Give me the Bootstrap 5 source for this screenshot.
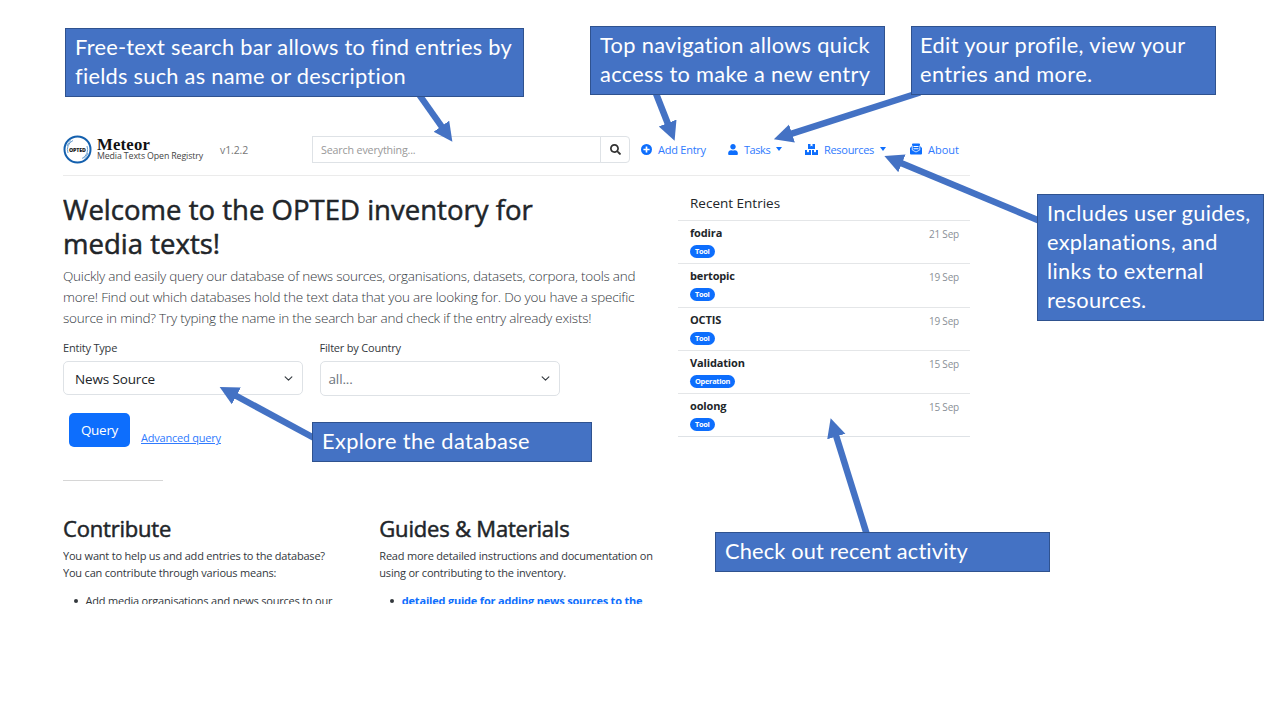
<!DOCTYPE html>
<html lang="en">
<head>
<meta charset="utf-8">
<meta name="viewport" content="width=device-width, initial-scale=1">
<title>Meteor</title>
<link href="https://cdn.jsdelivr.net/npm/bootstrap@5.3.0/dist/css/bootstrap.min.css" rel="stylesheet">
<script defer src="https://cdn.jsdelivr.net/npm/bootstrap@5.3.0/dist/js/bootstrap.bundle.min.js"></script>
<style>
body{font-family:"Open Sans","Noto Sans",sans-serif;font-size:11px;line-height:16.8px;letter-spacing:-.2px;color:#33383d;background:#fff;overflow:hidden}
.stage{width:1280px;height:720px;overflow:hidden}
.site{width:907px;height:481px;margin:123px 0 0 63px;overflow:hidden;white-space:nowrap}
.topbar{height:53px;border-bottom:1px solid #ebebeb}
.brand{width:107px;margin-left:5px}
.brand-name{font:bold 16.7px/14px "Liberation Serif",serif;letter-spacing:.2px;color:#111}
.brand-sub{font-size:8.8px;line-height:9px;letter-spacing:-.127px;color:#444}
.ver{font-size:10.5px;letter-spacing:-.1px;color:#777;width:92px;margin-left:16px;padding-top:2px}
.searchbox{width:318px;height:27px;flex:none}
.searchbox .form-control,.searchbox .btn{height:27px;min-height:0;border-color:#dee2e6;font-size:10.7px;padding:1px 8px 0;border-radius:0;letter-spacing:-.15px}
.searchbox .form-control::placeholder{color:#999}
.searchbox .btn{flex:none;width:30px;padding:0;border-radius:0 4px 4px 0;line-height:1}
.topnav{margin-left:11px;width:318px;letter-spacing:-.25px}
.topnav .nav-link{padding:0;color:#2f7afe;display:flex;align-items:center;height:27px}
.topnav .nav-link span{padding-top:2px}
.topnav .n1{width:87px;gap:6px}
.topnav .n2{width:77px;gap:6px;letter-spacing:-.45px}
.topnav .n3{width:105px;gap:6px;letter-spacing:-.3px}
.topnav .n4{gap:6px;letter-spacing:0}
.caret{border:3.5px solid transparent;border-top:4px solid #0d6efd;border-bottom:0}
.hero{padding-top:17px}
.hero h1{font-size:27.5px;line-height:33.6px;font-weight:500;letter-spacing:.02px;margin:0 0 6px}
.hero h1,.info h2{color:#212529;-webkit-text-stroke:.5px #212529}
.hero-text{font-size:13.5px;line-height:21px;font-weight:300;margin:0;letter-spacing:-.215px}
.hero-text .mid{letter-spacing:-.184px}
.picks{gap:16.5px;margin-top:10px}
.pick{width:240px}
.pick label{display:block;line-height:17px;margin-bottom:5px}
.pick .form-select{height:34px;border-radius:5px;font-size:13.5px;padding:0 11px;border-color:#dee2e6;background-position:right 8px center;background-size:11px 9px;line-height:34px;letter-spacing:-.14px}
.pick.country .form-select{height:35px;color:#6c757d;padding-left:8px;line-height:35px}
.actions{margin:17px 0 0 6px;gap:11px}
.go{width:61px;height:34px;font-size:13.5px;line-height:35px;padding:0;border:0;border-radius:5px;letter-spacing:-.3px}
.adv{margin-top:17.2px;height:16.8px;color:#2f7afe}
.rule{width:100px;margin-top:33px;border-top:1px solid #d6d6d6}
.info{margin-top:34px}
.info section{width:316.3px}
.info h2{font-size:22px;line-height:27px;font-weight:500;margin:0 0 6px}
.bullets{padding-left:25.5px;margin:11px 0 0}
.bullets span{margin-left:-3px}
main{width:615px;flex:none}
.recent .title{height:44px;padding:17px 0 0 12px;font-size:13.5px;line-height:20.5px;letter-spacing:0;color:#212529}
.entry{height:43.3px;border-top:1px solid #e4e6e8;padding:3px 11px 0 12px;color:#212529}
.entry b{display:block;line-height:17px;letter-spacing:-.15px}
.entry .badge{font-size:7.4px;line-height:13px;letter-spacing:-.28px;padding:0 5px;height:13px;display:block;width:max-content;margin-top:4px}
.date{color:#8a9097;font-size:10px;line-height:20px}
.note{position:absolute;background:#4472c4;border:1px solid #2f528f;color:#fff;font-family:Lato,sans-serif;font-size:21.8px;line-height:29px;letter-spacing:.26px;padding:3px 9px;white-space:nowrap}
.note-search{left:65px;top:28px;width:459px;height:69px}
.note-add{left:590px;top:26px;width:295px;height:69px;letter-spacing:.32px}
.note-profile{left:911px;top:26px;width:305px;height:69px;letter-spacing:.37px;padding-left:8px}
.note-guides{left:1037px;top:194px;width:227px;height:127px;letter-spacing:.28px}
.note-explore{left:312px;top:422px;width:280px;height:40px;letter-spacing:.38px}
.note-recent{left:715px;top:532px;width:335px;height:40px;letter-spacing:.15px}
.arrows{position:absolute;left:0;top:0;pointer-events:none}
</style>
</head>
<body>
<div class="stage position-relative">
<div class="d-flex">
<div class="site">
  <header class="topbar d-flex align-items-center">
    <svg class="flex-shrink-0" width="29" height="29" viewBox="0 0 29 29"><circle cx="14.500" cy="14.500" r="13" fill="#fff" stroke="#1460ae" stroke-width="2"/><path d="M10 5.500A10 10 0 0 0 5 18M19 23.500A10 10 0 0 0 24 11M8 5.500A11 11 0 0 0 4 11M21 23.500A11 11 0 0 0 25 18" fill="none" stroke="#6a9fd0" stroke-width="1"/><text x="6" y="16.500" font-size="5.300" font-weight="800" letter-spacing="0" fill="#222" textLength="17">OPTED</text></svg>
    <div class="brand flex-shrink-0"><div class="brand-name">Meteor</div><div class="brand-sub">Media Texts Open Registry</div></div>
    <div class="ver flex-shrink-0">v1.2.2</div>
    <div class="input-group flex-nowrap searchbox"><input class="form-control" placeholder="Search everything..."><button class="btn bg-white" aria-label="Search"><svg width="11" height="11" viewBox="0 0 512 512" fill="#333"><path d="M505 442.700 405.300 343c-4.500-4.500-10.600-7-17-7H372c27.600-35.300 44-79.700 44-128C416 93.100 322.900 0 208 0S0 93.100 0 208s93.100 208 208 208c48.300 0 92.700-16.400 128-44v16.300c0 6.400 2.500 12.500 7 17l99.700 99.700c9.400 9.400 24.600 9.400 33.900 0l28.300-28.300c9.400-9.400 9.400-24.600.1-34zM208 336c-70.700 0-128-57.200-128-128 0-70.700 57.200-128 128-128 70.700 0 128 57.200 128 128 0 70.700-57.200 128-128 128z"/></svg></button></div>
    <nav class="topnav nav flex-nowrap flex-shrink-0">
      <a class="nav-link n1" href="#"><svg width="11" height="11" viewBox="0 0 16 16"><circle cx="8" cy="8" r="8" fill="#0d6efd"/><path d="M8 3.500v9M3.500 8h9" stroke="#fff" stroke-width="2.400"/></svg><span>Add Entry</span></a>
      <a class="nav-link n2" href="#"><svg width="10" height="11" viewBox="0 0 448 512" fill="#0d6efd"><path d="M224 256c70.700 0 128-57.300 128-128S294.700 0 224 0 96 57.300 96 128s57.300 128 128 128zm89.600 32h-16.700c-22.200 10.200-46.900 16-72.900 16s-50.600-5.800-72.900-16h-16.700C60.200 288 0 348.200 0 422.400V464c0 26.500 21.500 48 48 48h352c26.500 0 48-21.500 48-48v-41.600c0-74.200-60.200-134.400-134.400-134.400z"/></svg><span>Tasks</span><i class="caret"></i></a>
      <a class="nav-link n3" href="#"><svg width="13" height="11" viewBox="0 0 26 22" fill="#0d6efd"><path d="M6 0h5v5l2-1.500L15 5V0h5v10H6zM0 12h4v5l2-1.500L8 17v-5h4v10H0zM14 12h4v5l2-1.500 2 1.500v-5h4v10H14z"/></svg><span>Resources</span><i class="caret"></i></a>
      <a class="nav-link n4" href="#"><svg width="12" height="12" viewBox="0 0 24 24"><path d="M0 10l4-4V3q0-2 2-2h12q2 0 2 2v3l4 4v11q0 2-2 2H2q-2 0-2-2z" fill="#0d6efd"/><path d="M4.500 5v9l7.500 4 7.500-4V5" fill="none" stroke="#fff" stroke-width="1.500"/><path d="M7 7h10M7 11.500h10" stroke="#fff" stroke-width="2"/></svg><span>About</span></a>
    </nav>
  </header>
  <div class="d-flex">
    <main>
      <section class="hero">
        <h1>Welcome to the OPTED inventory for<br>media texts!</h1>
        <p class="hero-text">Quickly and easily query our database of news sources, organisations, datasets, corpora, tools and<br><span class="mid">more! Find out which databases hold the text data that you are looking for. Do you have a specific</span><br>source in mind? Try typing the name in the search bar and check if the entry already exists!</p>
      </section>
      <form class="d-flex picks">
        <div class="pick"><label>Entity Type</label><div class="form-select">News Source</div></div>
        <div class="pick country"><label>Filter by Country</label><div class="form-select">all...</div></div>
      </form>
      <div class="d-flex actions"><button class="btn btn-primary go">Query</button><a class="adv" href="#">Advanced query</a></div>
      <div class="rule"></div>
      <div class="d-flex info">
        <section class="flex-shrink-0"><h2>Contribute</h2><div>You want to help us and add entries to the database?<br>You can contribute through various means:</div><ul class="bullets"><li><span>Add media organisations and news sources to our</span></li></ul></section>
        <section class="flex-shrink-0"><h2>Guides &amp; Materials</h2><div>Read more detailed instructions and documentation on<br>using or contributing to the inventory.</div><ul class="bullets"><li><span class="text-primary fw-bold">detailed guide for adding news sources to the</span></li></ul></section>
      </div>
    </main>
    <aside class="flex-grow-1 recent">
      <div class="title">Recent Entries</div>
      <div class="entry d-flex justify-content-between"><div><b>fodira</b><span class="badge rounded-pill text-bg-primary">Tool</span></div><span class="date">21 Sep</span></div>
      <div class="entry d-flex justify-content-between"><div><b>bertopic</b><span class="badge rounded-pill text-bg-primary">Tool</span></div><span class="date">19 Sep</span></div>
      <div class="entry d-flex justify-content-between"><div><b>OCTIS</b><span class="badge rounded-pill text-bg-primary">Tool</span></div><span class="date">19 Sep</span></div>
      <div class="entry d-flex justify-content-between"><div><b>Validation</b><span class="badge rounded-pill text-bg-primary">Operation</span></div><span class="date">15 Sep</span></div>
      <div class="entry d-flex justify-content-between"><div><b>oolong</b><span class="badge rounded-pill text-bg-primary">Tool</span></div><span class="date">15 Sep</span></div>
      <div class="border-top"></div>
    </aside>
  </div>
</div>
</div>
<svg class="arrows" width="1280" height="720" fill="none" stroke="#4472c4" stroke-width="6.500">
  <defs><marker id="head" markerUnits="userSpaceOnUse" markerWidth="20" markerHeight="20" refX="1" refY="9.500" orient="auto"><path d="M0 0L19 9.500L0 19z" fill="#4472c4" stroke="none"/></marker></defs>
  <path d="M418 93L442 127" marker-end="url(#head)"/>
  <path d="M655 91L668 124" marker-end="url(#head)"/>
  <path d="M920 92.500L791 133.800" marker-end="url(#head)"/>
  <path d="M1040 221L901 163" marker-end="url(#head)"/>
  <path d="M316 439L235.500 395.500" marker-end="url(#head)"/>
  <path d="M867 535L836 435.500" marker-end="url(#head)"/>
</svg>
<div class="note note-search">Free-text search bar allows to find entries by<br>fields such as name or description</div>
<div class="note note-add">Top navigation allows quick<br>access to make a new entry</div>
<div class="note note-profile">Edit your profile, view your<br>entries and more.</div>
<div class="note note-guides">Includes user guides,<br>explanations, and<br>links to external<br>resources.</div>
<div class="note note-explore">Explore the database</div>
<div class="note note-recent">Check out recent activity</div>
</div>
</body>
</html>
